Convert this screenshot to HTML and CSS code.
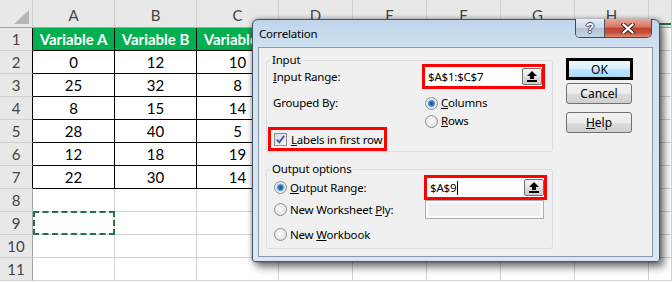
FILE: index.html
```html
<!DOCTYPE html>
<html lang="en">
<head>
    <meta charset="UTF-8">
    <title>Correlation</title>
    <link rel="stylesheet" href="styles.css">
</head>
<body>
    <div class="sheet">
        <div class="row head">
            <div class="c rh corner"><span class="tri"></span></div>
            <div class="c w">A</div><div class="c w">B</div><div class="c w">C</div>
            <div class="c n">D</div><div class="c n">E</div><div class="c n">F</div><div class="c n">G</div><div class="c n">H</div>
            <div class="c r sel-line"></div>
        </div>
        <div class="row">
            <div class="c rh edge">1</div>
            <div class="c w t th">Variable A</div><div class="c w t th">Variable B</div><div class="c w t th">Variable C</div>
            <div class="c n"></div><div class="c n"></div><div class="c n"></div><div class="c n"></div><div class="c n"></div><div class="c r"></div>
        </div>
        <div class="row">
            <div class="c rh edge">2</div>
            <div class="c w t">0</div><div class="c w t">12</div><div class="c w t">10</div>
            <div class="c n"></div><div class="c n"></div><div class="c n"></div><div class="c n"></div><div class="c n"></div><div class="c r"></div>
        </div>
        <div class="row">
            <div class="c rh edge">3</div>
            <div class="c w t">25</div><div class="c w t">32</div><div class="c w t">8</div>
            <div class="c n"></div><div class="c n"></div><div class="c n"></div><div class="c n"></div><div class="c n"></div><div class="c r"></div>
        </div>
        <div class="row">
            <div class="c rh edge">4</div>
            <div class="c w t">8</div><div class="c w t">15</div><div class="c w t">14</div>
            <div class="c n"></div><div class="c n"></div><div class="c n"></div><div class="c n"></div><div class="c n"></div><div class="c r"></div>
        </div>
        <div class="row">
            <div class="c rh edge">5</div>
            <div class="c w t">28</div><div class="c w t">40</div><div class="c w t">5</div>
            <div class="c n"></div><div class="c n"></div><div class="c n"></div><div class="c n"></div><div class="c n"></div><div class="c r"></div>
        </div>
        <div class="row">
            <div class="c rh edge">6</div>
            <div class="c w t">12</div><div class="c w t">18</div><div class="c w t">19</div>
            <div class="c n"></div><div class="c n"></div><div class="c n"></div><div class="c n"></div><div class="c n"></div><div class="c r"></div>
        </div>
        <div class="row">
            <div class="c rh edge">7</div>
            <div class="c w t">22</div><div class="c w t">30</div><div class="c w t">14</div>
            <div class="c n"></div><div class="c n"></div><div class="c n"></div><div class="c n"></div><div class="c n"></div><div class="c r"></div>
        </div>
        <div class="row">
            <div class="c rh">8</div>
            <div class="c w"></div><div class="c w"></div><div class="c w"></div>
            <div class="c n"></div><div class="c n"></div><div class="c n"></div><div class="c n"></div><div class="c n"></div><div class="c r"></div>
        </div>
        <div class="row">
            <div class="c rh">9</div>
            <div class="c w marquee"></div><div class="c w"></div><div class="c w"></div>
            <div class="c n"></div><div class="c n"></div><div class="c n"></div><div class="c n"></div><div class="c n"></div><div class="c r"></div>
        </div>
        <div class="row">
            <div class="c rh">10</div>
            <div class="c w"></div><div class="c w"></div><div class="c w"></div>
            <div class="c n"></div><div class="c n"></div><div class="c n"></div><div class="c n"></div><div class="c n"></div><div class="c r"></div>
        </div>
        <div class="row">
            <div class="c rh">11</div>
            <div class="c w"></div><div class="c w"></div><div class="c w"></div>
            <div class="c n"></div><div class="c n"></div><div class="c n"></div><div class="c n"></div><div class="c n"></div><div class="c r"></div>
        </div>
    </div>

    <div class="dialog">
        <div class="titlebar">
            <span class="title">Correlation</span>
            <div class="caps">
                <span class="cap-help">?</span>
                <span class="cap-close">
                    <svg width="14" height="11" viewBox="0 0 14 11">
                        <path d="M2.5 1.5 L11.5 9.5 M11.5 1.5 L2.5 9.5" stroke="#3b2b28" stroke-width="4.2" stroke-linecap="square"/>
                        <path d="M2.5 1.5 L11.5 9.5 M11.5 1.5 L2.5 9.5" stroke="#fff" stroke-width="2.2" stroke-linecap="square"/>
                    </svg>
                </span>
            </div>
        </div>
        <div class="client">
            <div class="groups">
                <div class="group group-in">
                    <span class="group-title">Input</span>
                    <div class="in-row">
                        <span><u>I</u>nput Range:</span>
                        <div class="hl hl-ref">
                            <div class="refedit">
                                <span>$A$1:$C$7</span>
                                <span class="ref-btn">
                                    <svg width="10" height="11" viewBox="0 0 10 11"><path d="M5 0 L10 5 H7 V8 H3 V5 H0 Z" fill="#000"/><rect x="0" y="9" width="10" height="2" fill="#000"/></svg>
                                </span>
                            </div>
                        </div>
                    </div>
                    <div class="grouped">
                        <span class="grouped-label">Grouped By:</span>
                        <div class="radio-list">
                            <div class="radio on"><span class="dot"></span><span><u>C</u>olumns</span></div>
                            <div class="radio"><span class="dot"></span><span><u>R</u>ows</span></div>
                        </div>
                    </div>
                    <div class="hl hl-check">
                        <span class="checkbox">
                            <svg width="9" height="9" viewBox="0 0 9 9"><path d="M0.8 4.6 L3.4 7.4 L8.2 0.8" fill="none" stroke="#3d5a98" stroke-width="1.8"/></svg>
                        </span>
                        <span class="check-label"><u>L</u>abels in first row</span>
                    </div>
                </div>

                <div class="group group-out">
                    <span class="group-title">Output options</span>
                    <div class="out-row range-row">
                        <div class="radio on"><span class="dot"></span><span><u>O</u>utput Range:</span></div>
                        <div class="hl hl-ref">
                            <div class="refedit">
                                <span>$A$9</span><span class="caret"></span>
                                <span class="ref-btn">
                                    <svg width="10" height="11" viewBox="0 0 10 11"><path d="M5 0 L10 5 H7 V8 H3 V5 H0 Z" fill="#000"/><rect x="0" y="9" width="10" height="2" fill="#000"/></svg>
                                </span>
                            </div>
                        </div>
                    </div>
                    <div class="out-row ply-row">
                        <div class="radio"><span class="dot"></span><span>New Worksheet <u>P</u>ly:</span></div>
                        <span class="disabled-input"></span>
                    </div>
                    <div class="out-row book-row">
                        <div class="radio"><span class="dot"></span><span>New <u>W</u>orkbook</span></div>
                    </div>
                </div>
            </div>

            <div class="btns">
                <button class="btn btn-default">OK</button>
                <button class="btn btn-cancel">Cancel</button>
                <button class="btn btn-help"><span><u>H</u>elp</span></button>
            </div>
        </div>
    </div>
</body>
</html>
```

FILE: styles.css
```css
body {
    margin: 0;
    width: 672px;
    height: 282px;
    overflow: hidden;
    background: #fff;
    position: relative;
    font-family: 'Lato', 'Liberation Sans', sans-serif;
}

/* spreadsheet */
.row {
    display: flex;
    height: 23px;
}
.row.head {
    height: 28px;
}
.c {
    box-sizing: border-box;
    flex: none;
    display: flex;
    align-items: center;
    justify-content: center;
    border-right: 1px solid #d4d4d4;
    border-bottom: 1px solid #d4d4d4;
    font-size: 15px;
    color: #000;
    white-space: nowrap;
}
.w { width: 82px; }
.n { width: 74px; }
.r { flex: 1; }
.rh {
    width: 33px;
    background: #e8e8e8;
    color: #444;
    border-right-color: #a6a6a6;
    border-bottom-color: #d0d0d0;
}
.rh.edge {
    border-right-color: #000;
}
.head .c {
    background: #e8e8e8;
    color: #444;
    padding-top: 3px;
    border-right-color: #d0d0d0;
    border-bottom-color: #a6a6a6;
}
.corner {
    align-items: flex-end !important;
    justify-content: flex-end !important;
    padding: 0 3px 3px 0;
}
.tri {
    width: 15px;
    height: 14px;
    background: #b7b7b7;
    clip-path: polygon(100% 0, 100% 100%, 0 100%);
}
.sel-line {
    position: relative;
}
.sel-line::after {
    content: '';
    position: absolute;
    left: 0;
    right: 0;
    bottom: 2px;
    height: 2px;
    background: #217346;
}
.t {
    border-right-color: #000;
    border-bottom-color: #000;
}
.th {
    background: #00b050;
    color: #fff;
    font-weight: bold;
}
.marquee {
    position: relative;
}
.marquee::after {
    content: '';
    position: absolute;
    left: 0;
    top: -1px;
    right: -1px;
    bottom: -1px;
    border: 2px dashed #217346;
}

/* dialog window */
.dialog {
    position: absolute;
    left: 252px;
    top: 19px;
    width: 408px;
    height: 243px;
    box-sizing: border-box;
    padding: 0 6px 4px 5px;
    border: 1px solid #4a5260;
    border-radius: 6px 6px 3px 3px;
    background: linear-gradient(#bfd4ea, #d2e2f3 30px, #d9e7f6);
    box-shadow: 4px 5px 9px rgba(0,0,0,0.55), 0 0 5px rgba(0,0,0,0.35);
    display: flex;
    flex-direction: column;
    font-family: 'Noto Sans', 'Open Sans', sans-serif;
    font-size: 11.5px;
    letter-spacing: -0.2px;
    color: #000;
    white-space: nowrap;
}
.titlebar {
    height: 27px;
    display: flex;
    align-items: flex-start;
    flex: none;
}
.title {
    margin: 6px 0 0 1px;
    line-height: 16px;
}
.caps {
    display: flex;
    height: 19px;
    box-sizing: border-box;
    margin: -1px 1px 0 auto;
    border: 1px solid #3f4a5a;
    border-top: none;
    border-radius: 0 0 5px 5px;
    overflow: hidden;
}
.cap-help {
    width: 28px;
    border-right: 1px solid #4a5566;
    background: linear-gradient(#e4ecf5, #cbd8e6 50%, #b2c2d5 51%, #c6d5e5);
    display: flex;
    align-items: center;
    justify-content: center;
    color: #fff;
    font-weight: bold;
    font-size: 14px;
    font-family: 'Liberation Sans', sans-serif;
    text-shadow: 1px 0 #3b4b60, -1px 0 #3b4b60, 0 1px #3b4b60, 0 -1px #3b4b60;
}
.cap-close {
    width: 46px;
    background: linear-gradient(#e9a898, #d67563 45%, #c24531 50%, #c54e39 75%, #dd8c72);
    display: flex;
    align-items: center;
    justify-content: center;
}
.client {
    flex: 1;
    display: flex;
    align-items: flex-start;
    background: #f0f0f0;
    border: 1px solid #8a99aa;
}
.groups {
    width: 287px;
    margin: 12px 0 0 7px;
}
.group {
    position: relative;
    border: 1px solid #d5dfe5;
    border-radius: 3px;
}
.group-title {
    position: absolute;
    top: -9px;
    left: 3px;
    padding: 0 2px;
    line-height: 16px;
    background: #f0f0f0;
}
.hl {
    box-sizing: border-box;
    border: 3px solid #f00;
    flex: none;
}
.hl-ref {
    width: 123px;
    height: 25px;
}
.refedit {
    height: 100%;
    background: #fff;
    display: flex;
    align-items: center;
    padding-left: 3px;
}
.caret {
    width: 1px;
    height: 14px;
    background: #000;
    margin-left: 1px;
}
.ref-btn {
    margin-left: auto;
    width: 20px;
    height: 17px;
    box-sizing: border-box;
    border: 1px solid #707070;
    border-radius: 2px;
    background: linear-gradient(#f4f4f4, #e6e6e6 50%, #d9d9d9 51%, #d0d0d0);
    display: flex;
    align-items: center;
    justify-content: center;
}

.in-row {
    display: flex;
    align-items: center;
    justify-content: space-between;
    height: 25px;
    margin-top: 3px;
    padding: 0 7px 0 6px;
}
.grouped {
    display: flex;
    justify-content: space-between;
    margin-top: 5px;
    padding: 0 7px 0 6px;
    line-height: 18px;
}
.radio-list {
    width: 120px;
}
.radio {
    height: 18px;
    display: flex;
    align-items: center;
    gap: 3px;
}
.dot {
    flex: none;
    width: 13px;
    height: 13px;
    box-sizing: border-box;
    border-radius: 50%;
    border: 1px solid #8e8f8f;
    background: radial-gradient(circle at 45% 40%, #fdfdfd, #e2e2e2 70%, #d0d0d0);
}
.radio.on .dot {
    background: radial-gradient(circle, #1d4f84 0, #2f74bc 2px, #6fa6da 3.2px, #cfe0f0 4px, #eeeeee 5px, #dcdcdc);
}
.hl-check {
    width: 119px;
    height: 24px;
    margin: -3px 0 0 1px;
    padding-left: 3px;
    display: flex;
    align-items: center;
    gap: 4px;
}
.checkbox {
    flex: none;
    width: 13px;
    height: 13px;
    box-sizing: border-box;
    border: 1px solid #8e8f8f;
    background: linear-gradient(135deg, #d9dde3, #f3f5f7);
    display: flex;
    align-items: center;
    justify-content: center;
}

.group-out {
    margin-top: 17px;
    padding-bottom: 5px;
}
.out-row {
    display: flex;
    align-items: center;
    justify-content: space-between;
    padding: 0 5px 0 7px;
}
.range-row {
    margin-top: 5px;
}
.ply-row {
    height: 19px;
    padding-right: 8px;
}
.book-row {
    height: 18px;
    margin-top: 6px;
}
.disabled-input {
    width: 119px;
    height: 19px;
    box-sizing: border-box;
    border: 1px solid #abadb3;
    background: #f0f0f0;
    box-shadow: inset 0 0 0 2px #fafafa;
}

/* command buttons */
.btns {
    display: flex;
    flex-direction: column;
    margin: 10px 0 0 13px;
    width: 67px;
}
.btn {
    box-sizing: border-box;
    width: 66px;
    height: 21px;
    padding: 0;
    border: 1px solid #707070;
    border-radius: 3px;
    background: linear-gradient(#f2f2f2, #ebebeb 50%, #dddddd 51%, #cfcfcf);
    font-family: inherit;
    font-size: 12px;
    color: #000;
}
.btn-default {
    width: 67px;
    height: 22px;
    border: 3px solid #000;
    border-radius: 0;
    background: linear-gradient(#eaf6fd, #d9f0fc 50%, #bee6fd 51%, #a7d9f5);
}
.btn-cancel {
    margin-top: 3px;
}
.btn-help {
    margin-top: 8px;
}
```
